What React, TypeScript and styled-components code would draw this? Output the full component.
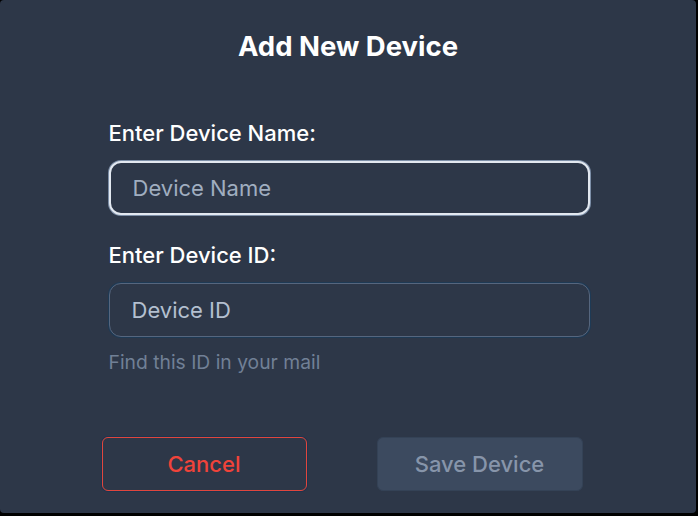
import styled, { createGlobalStyle } from "styled-components";

const GlobalStyle = createGlobalStyle`
  html, body {
    margin: 0;
    padding: 0;
    background: #000000;
  }
  body {
    font-family: Inter, "Noto Sans", sans-serif;
  }
`;

const Card = styled.div`
  width: 696px;
  height: 513px;
  box-sizing: border-box;
  background: #2d3748;
  border-radius: 4px;
  padding-top: 29px;
  display: flex;
  flex-direction: column;
  align-items: center;
`;

const Title = styled.h2`
  margin: 0;
  color: #ffffff;
  font-size: 27.5px;
  line-height: 34px;
  font-weight: 700;
`;

const Form = styled.div`
  width: 481px;
  margin-top: 56px;
  margin-left: 2px;
  display: flex;
  flex-direction: column;
`;

const Label = styled.label`
  color: #ffffff;
  font-size: 22px;
  line-height: 28px;
  font-weight: 500;
  margin-bottom: 14px;
`;

const Input = styled.input<{ $focused?: boolean }>`
  box-sizing: border-box;
  width: 100%;
  height: 54px;
  padding: 0 22px;
  border-radius: 12px;
  background: #2d3748;
  color: #ffffff;
  font-family: inherit;
  font-size: 22px;
  outline: none;
  border: ${(p) => (p.$focused ? "2px solid #e2e8f0" : "1px solid #56667e")};
  box-shadow: ${(p) =>
    p.$focused ? "0 0 0 1px #7d8fa8" : "0 0 0 1px #1e3a55"};
  &::placeholder {
    color: ${(p) => (p.$focused ? "#a0aec0" : "#b4c0d0")};
  }
`;

const Field = styled.div<{ $gap?: number }>`
  display: flex;
  flex-direction: column;
  margin-bottom: ${(p) => p.$gap ?? 0}px;
`;

const Hint = styled.span`
  color: #718096;
  font-size: 19.3px;
  line-height: 24px;
  margin-top: 13px;
`;

const Actions = styled.div`
  width: 481px;
  margin-top: 63px;
  margin-left: -12px;
  display: flex;
  justify-content: space-between;
`;

const Button = styled.button<{ $variant: "cancel" | "save" }>`
  box-sizing: border-box;
  width: ${(p) => (p.$variant === "cancel" ? 205 : 206)}px;
  height: 54px;
  border-radius: 6px;
  font-family: inherit;
  font-size: 22px;
  font-weight: 500;
  cursor: pointer;
  background: ${(p) => (p.$variant === "cancel" ? "transparent" : "#3c4a5f")};
  color: ${(p) => (p.$variant === "cancel" ? "#f0433a" : "#8795aa")};
  border: 1px solid
    ${(p) => (p.$variant === "cancel" ? "#e0463d" : "#344256")};
  box-shadow: ${(p) =>
    p.$variant === "cancel" ? "0 0 0 1px #1c3450" : "none"};
`;

export default function App() {
  return (
    <>
      <GlobalStyle />
      <Card>
        <Title>Add New Device</Title>
        <Form>
          <Field $gap={26}>
            <Label>Enter Device Name:</Label>
            <Input $focused placeholder="Device Name" />
          </Field>
          <Field>
            <Label>Enter Device ID:</Label>
            <Input placeholder="Device ID" />
            <Hint>Find this ID in your mail</Hint>
          </Field>
        </Form>
        <Actions>
          <Button $variant="cancel">Cancel</Button>
          <Button $variant="save">Save Device</Button>
        </Actions>
      </Card>
    </>
  );
}
